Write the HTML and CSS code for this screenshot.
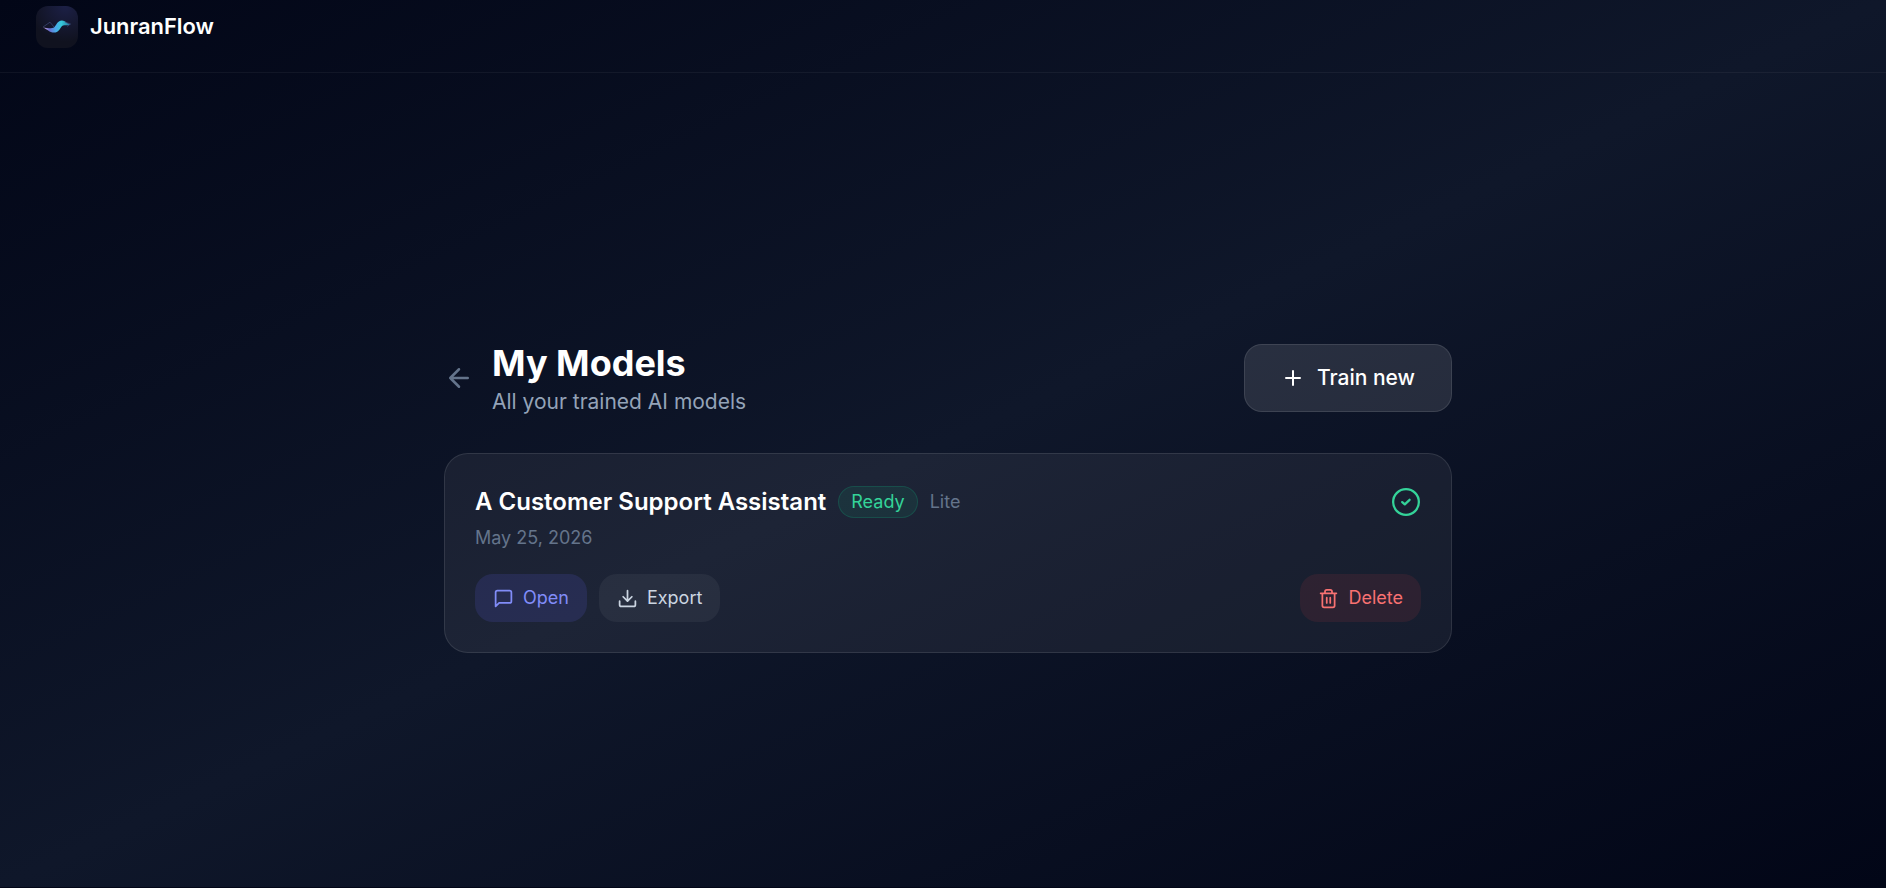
FILE: index.html
```html
<!DOCTYPE html>
<html lang="en">
<head>
    <meta charset="UTF-8">
    <meta name="viewport" content="width=device-width, initial-scale=1.0">
    <title>JunranFlow - My Models</title>
    <link rel="stylesheet" href="styles.css">
</head>
<body>
    <div class="page">
        <header class="header">
            <div class="logo">
                <svg width="30" height="14" viewBox="0 0 30 14" fill="none">
                    <defs>
                        <linearGradient id="wave" x1="0" y1="0" x2="30" y2="0" gradientUnits="userSpaceOnUse">
                            <stop offset="0" stop-color="#e0b0e0"/>
                            <stop offset="0.25" stop-color="#6a6fd0"/>
                            <stop offset="0.45" stop-color="#4aa8ea"/>
                            <stop offset="0.65" stop-color="#35c8d8"/>
                            <stop offset="1" stop-color="#24608f"/>
                        </linearGradient>
                    </defs>
                    <path d="M.7 7.400C5 7.600 9 9.200 12 7.500C14.500 5.500 15 .8 20 .6C23.500 .6 24 3.600 28.500 4.200C25 6.600 22 4.200 20 6C18 8.500 16.500 12.500 12 12.600C7.500 12.500 5 8.800 .7 7.400Z" fill="url(#wave)"/>
                    <path d="M1 7L8 2.200L12 7M23 2L28.500 4L25 6.500" stroke="#3d4a78" stroke-width="0.7"/>
                </svg>
            </div>
            <span class="brand">JunranFlow</span>
        </header>

        <main class="main">
            <div class="content">
                <div class="title-row">
                    <a class="back" href="#" aria-label="Back">
                        <svg class="icon" width="30" height="30" viewBox="0 0 24 24"><path d="M19 12H5M12 19l-7-7 7-7"/></svg>
                    </a>
                    <div class="titles">
                        <h1>My Models</h1>
                        <p>All your trained AI models</p>
                    </div>
                    <button class="train">
                        <svg class="icon" width="24" height="24" viewBox="0 0 24 24"><path d="M12 5v14M5 12h14"/></svg>
                        <span>Train new</span>
                    </button>
                </div>

                <!-- Model card -->
                <div class="card">
                    <div class="card-head">
                        <h2>A Customer Support Assistant</h2>
                        <span class="badge">Ready</span>
                        <span class="plan">Lite</span>
                        <svg class="icon check" width="28" height="28" viewBox="0 0 28 28"><circle cx="14" cy="14" r="12.850"/><path d="M10.200 14.100l2.600 2.300 4.800-4.600"/></svg>
                    </div>
                    <div class="date">May 25, 2026</div>
                    <div class="actions">
                        <button class="btn open">
                            <svg class="icon" width="21" height="21" viewBox="0 0 24 24"><path d="M21 15a2 2 0 0 1-2 2H7l-4 4V5a2 2 0 0 1 2-2h14a2 2 0 0 1 2 2z"/></svg>
                            <span>Open</span>
                        </button>
                        <button class="btn export">
                            <svg class="icon" width="21" height="21" viewBox="0 0 24 24"><path d="M21 15v4a2 2 0 0 1-2 2H5a2 2 0 0 1-2-2v-4M7 10l5 5 5-5M12 15V3"/></svg>
                            <span>Export</span>
                        </button>
                        <button class="btn delete">
                            <svg class="icon" width="21" height="21" viewBox="0 0 24 24"><path d="M3 6h18M19 6v14a2 2 0 0 1-2 2H7a2 2 0 0 1-2-2V6M8 6V4a2 2 0 0 1 2-2h4a2 2 0 0 1 2 2v2M10 11v6M14 11v6"/></svg>
                            <span>Delete</span>
                        </button>
                    </div>
                </div>
            </div>
        </main>
    </div>
</body>
</html>
```

FILE: styles.css
```css
* {
    box-sizing: border-box;
}
body {
    margin: 0;
    height: 888px;
    background: #020617;
    font-family: Inter, "Liberation Sans", sans-serif;
    color: #fff;
    overflow: hidden;
}
.page {
    height: 887px;
    background: linear-gradient(to bottom right, #020617, #0f172a 50%, #020617);
}
.header {
    display: flex;
    align-items: center;
    gap: 12px;
    height: 73px;
    padding: 0 36px 18px;
    border-bottom: 1px solid rgba(255, 255, 255, 0.05);
}
.logo {
    display: flex;
    align-items: center;
    justify-content: center;
    width: 42px;
    height: 42px;
    border-radius: 12px;
    background: radial-gradient(circle at 70% 0, #1c2046, #10121f 70%);
}
.brand {
    font-size: 21.900px;
    font-weight: 600;
    line-height: 26px;
    padding-bottom: 2px;
}
.main {
    display: flex;
    justify-content: center;
    padding: 271px 0 0 10px;
}
.content {
    width: 1008px;
}
.icon {
    fill: none;
    stroke: currentColor;
    stroke-width: 2;
    stroke-linecap: round;
    stroke-linejoin: round;
    flex-shrink: 0;
}
.title-row {
    display: flex;
    align-items: center;
    height: 68px;
    margin-bottom: 41px;
}
.back {
    display: flex;
    width: 30px;
    margin-right: 18px;
    color: #64748b;
}
h1 {
    margin: 0;
    font-size: 36px;
    font-weight: 700;
    line-height: 47px;
}
.titles p {
    margin: 0;
    font-size: 21px;
    line-height: 30px;
    color: #94a3b8;
}
.train {
    display: flex;
    align-items: center;
    justify-content: center;
    gap: 12px;
    width: 208px;
    height: 68px;
    margin-left: auto;
    border: 1px solid rgba(255, 255, 255, 0.1);
    border-radius: 18px;
    background: rgba(255, 255, 255, 0.11);
    color: #fff;
    font: 500 21px Inter, sans-serif;
}
.train span,
.btn span {
    padding-bottom: 2px;
}
.card {
    height: 200px;
    padding: 32px 30px 0;
    border: 1px solid rgba(255, 255, 255, 0.1);
    border-radius: 24px;
    background: rgba(255, 255, 255, 0.06);
}
.card-head {
    display: flex;
    align-items: center;
    height: 32px;
}
h2 {
    margin: 0 12px 0 0;
    font-size: 24px;
    font-weight: 600;
    line-height: 30px;
}
.badge {
    display: flex;
    align-items: center;
    height: 32px;
    margin-right: 12px;
    padding: 0 12px 2px;
    border: 1px solid rgba(16, 185, 129, 0.2);
    border-radius: 16px;
    background: rgba(16, 185, 129, 0.1);
    color: #34d399;
    font-size: 18px;
}
.plan {
    padding-bottom: 2px;
    font-size: 18px;
    color: #64748b;
}
.check {
    margin: 0 1px 0 auto;
    color: #34d399;
    stroke-width: 2.3;
}
.date {
    margin-top: 6px;
    font-size: 18px;
    line-height: 28px;
    color: #64748b;
}
.actions {
    display: flex;
    gap: 12px;
    margin-top: 22px;
}
.btn {
    display: flex;
    align-items: center;
    gap: 9px;
    height: 48px;
    padding: 0 18px;
    border: 0;
    border-radius: 18px;
    font: 400 18px Inter, sans-serif;
}
.open {
    background: rgba(99, 102, 241, 0.15);
    color: #818cf8;
}
.export {
    background: rgba(255, 255, 255, 0.05);
    color: #cbd5e1;
}
.delete {
    margin-left: auto;
    background: rgba(239, 68, 68, 0.1);
    color: #f87171;
}
```
